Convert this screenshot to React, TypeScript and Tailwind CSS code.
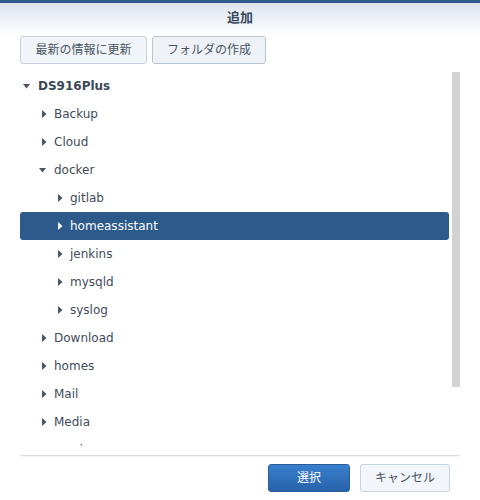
import React from "react";

type Node = { name: string; level: number; open?: boolean; selected?: boolean; bold?: boolean };

const nodes: Node[] = [
  { name: "DS916Plus", level: 0, open: true, bold: true },
  { name: "Backup", level: 1 },
  { name: "Cloud", level: 1 },
  { name: "docker", level: 1, open: true },
  { name: "gitlab", level: 2 },
  { name: "homeassistant", level: 2, selected: true },
  { name: "jenkins", level: 2 },
  { name: "mysqld", level: 2 },
  { name: "syslog", level: 2 },
  { name: "Download", level: 1 },
  { name: "homes", level: 1 },
  { name: "Mail", level: 1 },
  { name: "Media", level: 1 },
  { name: "music", level: 1 },
];

const indent = ["pl-0", "pl-4", "pl-8"];

function Caret({ open, light }: { open?: boolean; light?: boolean }) {
  const fill = light ? "#ffffff" : "#4b5563";
  if (open) {
    return (
      <svg width="8" height="5" viewBox="0 0 8 5" className="ml-[3px]">
        <path d="M0 0 L7 0 L3.5 4.5 Z" fill={fill} />
      </svg>
    );
  }
  return (
    <svg width="5" height="8" viewBox="0 0 5 8" className="ml-[6px]">
      <path d="M0 0 L4.5 4 L0 8 Z" fill={fill} />
    </svg>
  );
}

export default function App() {
  const font = { fontFamily: '"DejaVu Sans", "Noto Sans CJK JP", sans-serif' };
  return (
    <div className="w-[480px] h-[500px] bg-white overflow-hidden" style={font}>
      <div className="h-[3px] bg-[#2d5b8e]" />
      <div className="h-[30px] bg-gradient-to-b from-[#dde3ed] to-[#fcfdfe] flex items-center justify-center">
        <span className="text-[13px] font-bold text-[#35475d]">追加</span>
      </div>
      <div className="flex gap-[5px] px-5 pt-[3px]">
        <button className="h-[28px] w-[127px] rounded-[3px] border border-[#c6d0dc] bg-[#f1f5f9] text-[12px] text-[#4a5563]">
          最新の情報に更新
        </button>
        <button className="h-[28px] w-[114px] rounded-[3px] border border-[#b9c4d1] bg-[#eef2f7] text-[12px] text-[#4a5563]">
          フォルダの作成
        </button>
      </div>

      <div className="mx-5 mt-[8px] h-[374px] flex gap-[3px]">
        <div className="flex-1 overflow-hidden">
          {nodes.map((n) => (
            <div
              key={n.name}
              className={`h-[28px] flex items-center rounded-[3px] ${indent[n.level]} ${
                n.selected ? "bg-[#2b5a8b] text-white" : "text-[#3f4b5b]"
              }`}
            >
              <div className="w-[18px] flex items-center">
                <Caret open={n.open} light={n.selected} />
              </div>
              <span className={`text-[12px] ${n.bold ? "font-bold text-[#3a4757]" : ""}`}>{n.name}</span>
            </div>
          ))}
        </div>
        <div className="w-[8px]">
          <div className="h-[315px] bg-[#d2d2d2]" />
        </div>
      </div>

      <div className="mx-5 mt-[9px] border-t border-[#dcdcdc] shadow-[0_1px_1px_#f0f0f0]" />
      <div className="flex justify-end gap-[10px] pr-[30px] pt-[8px]">
        <button className="h-[28px] w-[82px] rounded-[3px] border border-[#2a5d9c] bg-gradient-to-b from-[#3a7fcc] to-[#2862ab] text-[12px] text-white">
          選択
        </button>
        <button className="h-[28px] w-[90px] rounded-[3px] border border-[#c6d2de] bg-[#f2f6fa] text-[12px] text-[#4a5563]">
          キャンセル
        </button>
      </div>
    </div>
  );
}
